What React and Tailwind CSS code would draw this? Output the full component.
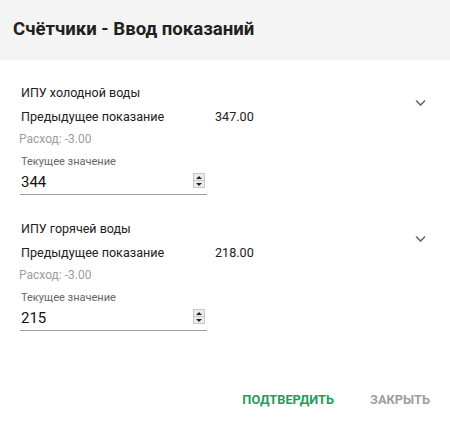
import React from "react";

const meters = [
  { title: "ИПУ холодной воды", prev: "347.00", diff: "-3.00", value: "344" },
  { title: "ИПУ горячей воды", prev: "218.00", diff: "-3.00", value: "215" },
];

const Spinner = () => (
  <div className="absolute right-[2px] top-[1px] flex h-[15px] w-[12px] flex-col border border-[#c8c8c8] bg-[#ececec]">
    <div className="flex flex-1 items-center justify-center border-b border-[#c8c8c8]">
      <div className="h-0 w-0 border-x-[3px] border-b-[3px] border-x-transparent border-b-[#222]"></div>
    </div>
    <div className="flex flex-1 items-center justify-center">
      <div className="h-0 w-0 border-x-[3px] border-t-[3px] border-x-transparent border-t-[#222]"></div>
    </div>
  </div>
);

const MeterBlock = ({ meter }) => (
  <div className="flex pl-[21px] pr-[24px]">
    <div className="flex-1">
      <div className="h-4 text-[12.5px] leading-4 text-[#212121]">{meter.title}</div>
      <div className="mt-2 flex h-4 text-[12.6px] leading-4 text-[#212121]">
        <span className="w-[194px]">Предыдущее показание</span>
        <span>{meter.prev}</span>
      </div>
      <div className="-ml-[2px] mt-[6px] h-4 text-[12px] leading-4 text-[#9e9e9e]">
        Расход: {meter.diff}
      </div>
      <div className="mt-2 h-[14px] text-[11px] leading-[14px] text-[#666]">
        Текущее значение
      </div>
      <div className="relative mt-[3px] w-[187px] -ml-[1px] border-b border-[#9e9e9e] pb-[2px]">
        <div className="h-5 pl-[1px] text-[15px] leading-5 text-[#111]">{meter.value}</div>
        <Spinner />
      </div>
    </div>
    <svg
      className="mt-[14px]"
      width="11"
      height="8"
      viewBox="0 0 11 8"
      fill="none"
      stroke="#6a6a6a"
      strokeWidth="1.6"
    >
      <path d="M1 1.5l4.5 4.5 4.5-4.5" />
    </svg>
  </div>
);

export default function App() {
  return (
    <div
      className="flex h-[422px] w-[450px] flex-col bg-white"
      style={{ fontFamily: "Roboto, 'Noto Sans', sans-serif" }}
    >
      <div className="flex h-[60px] items-center bg-[#f4f4f4] px-[13px]">
        <h2 className="text-[18.6px] font-bold text-[#212121]">Счётчики - Ввод показаний</h2>
      </div>

      <div className="flex flex-col gap-[26px] pt-[25px]">
        {meters.map((m) => (
          <MeterBlock key={m.title} meter={m} />
        ))}
      </div>

      <div className="mt-auto flex items-center justify-end gap-[36px] pb-[13px] pr-[20px]">
        <button className="text-[12.8px] font-bold uppercase text-[#1f9d5b]">Подтвердить</button>
        <button className="text-[12.8px] font-bold uppercase text-[#9e9e9e]">Закрыть</button>
      </div>
    </div>
  );
}
